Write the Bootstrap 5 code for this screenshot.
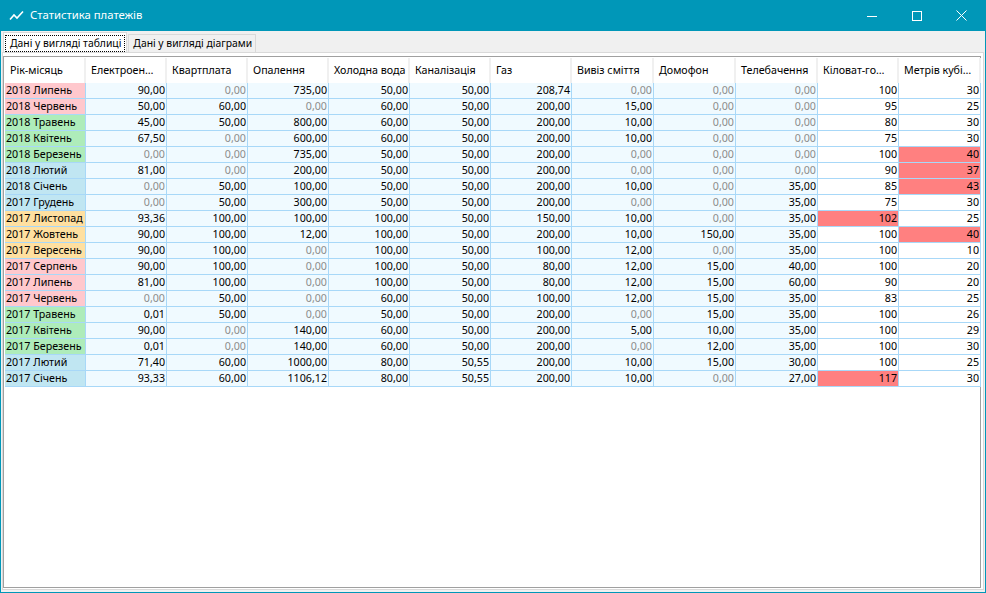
<!DOCTYPE html>
<html lang="uk"><head><meta charset="utf-8"><title>Статистика платежів</title>
<link rel="stylesheet" href="https://cdn.jsdelivr.net/npm/bootstrap@5.3.0/dist/css/bootstrap.min.css">
<style>
html,body{margin:0;height:593px;overflow:hidden}
body{font-family:"Noto Sans",sans-serif;font-size:10.7px;color:#000;background:#0097b8}
.win{width:986px;height:593px;padding:0 1px 1px}
.titlebar{height:31px;color:#fff;font-size:11.3px;padding-left:8px;padding-right:1px}
.ttl{margin-left:5px}
.wbtn{width:45px;height:31px}
.client{height:561px;background:#f0f0f0;padding:1px}
.tabbar{height:20px;padding-left:1px}
.tabx{height:18px;margin-top:2px;background:#f0f0f0;border:1px solid #d9d9d9;border-bottom:0;padding:0 3px 0 4px;line-height:17px;white-space:nowrap;font-size:10.35px}
.taba{height:20px;margin-top:0;margin-right:1px;background:#fff;padding:2px 1px 1px;line-height:15px}
.taba span{display:block;border:1px dotted #000;padding:0 3px 0 4px;height:17px;line-height:15px}
.pane{height:538px;background:#fff;border:1px solid #d9d9d9;padding:3px 2px 2px 0}
.frame{height:532px;border:1px solid #a0a0a0;background:#fff;padding:1px}
.grid{table-layout:fixed;border-collapse:separate;border-spacing:0;width:975px}
.grid th{height:25px;font-weight:400;padding:0 0 0 5px;background:#fff;border-right:2px solid #f0f0f0;border-bottom:0;white-space:nowrap;overflow:hidden;vertical-align:middle}
.grid td{height:16px;padding:0 1px 0 0;text-align:right;background:#f0faff;border-right:1px solid #a8d8f8;border-bottom:1px solid #a8d8f8;line-height:15px;white-space:nowrap;overflow:hidden}
.grid td:first-child{text-align:left;padding-left:1px}
.grid td.wh{background:#fff}
.grid td.z{color:#8c8c8c}
.grid td.hot{background:#ff8080}
.grid td.pk{background:#ffc8cd}
.grid td.gr{background:#aeecba}
.grid td.bl{background:#c0e6f2}
.grid td.ye{background:#ffe0a0}
</style></head><body>
<div class="win d-flex flex-column">
<div class="titlebar d-flex align-items-center">
<svg width="16" height="16" viewBox="0 0 16 16" fill="none" stroke="#fff" stroke-width="1.6"><path d="M1 11.5 5 7l3 3 6-6.500"/></svg>
<span class="ttl flex-grow-1">Статистика платежів</span>
<div class="wbtn d-flex align-items-center justify-content-center"><svg width="10" height="10" viewBox="0 0 10 10"><path d="M0 5.500h10" stroke="#fff"/></svg></div>
<div class="wbtn d-flex align-items-center justify-content-center"><svg width="10" height="10" viewBox="0 0 10 10" fill="none"><rect x=".5" y=".5" width="9" height="9" stroke="#fff"/></svg></div>
<div class="wbtn d-flex align-items-center justify-content-center"><svg width="11" height="11" viewBox="0 0 11 11" fill="none"><path d="M.5.500l10 10M10.500.500l-10 10" stroke="#fff"/></svg></div>
</div>
<div class="client">
<div class="tabbar d-flex align-items-start">
<div class="tabx taba"><span>Дані у вигляді таблиці</span></div>
<div class="tabx">Дані у вигляді діаграми</div>
</div>
<div class="pane"><div class="frame">
<table class="grid" id="t"><colgroup id="cg"></colgroup><thead><tr id="h"></tr></thead><tbody id="b"></tbody></table>
</div></div>
</div>
</div>
<script>
const W=[81,81,81,81,81,81,81,82,82,82,81,82];
document.getElementById('cg').innerHTML=W.map(w=>`<col style="width:${w}px">`).join('');
const H=['Рік-місяць','Електроен…','Квартплата','Опалення','Холодна вода','Каналізація','Газ','Вивіз сміття','Домофон','Телебачення','Кіловат-го…','Метрів кубі…'];
document.getElementById('h').innerHTML=H.map(x=>`<th>${x}</th>`).join('');
const R=`pk|2018 Липень|90,00|0,00|735,00|50,00|50,00|208,74|0,00|0,00|0,00|100|30
pk|2018 Червень|50,00|60,00|0,00|60,00|50,00|200,00|15,00|0,00|0,00|95|25
gr|2018 Травень|45,00|50,00|800,00|60,00|50,00|200,00|10,00|0,00|0,00|80|30
gr|2018 Квітень|67,50|0,00|600,00|60,00|50,00|200,00|10,00|0,00|0,00|75|30
gr|2018 Березень|0,00|0,00|735,00|50,00|50,00|200,00|0,00|0,00|0,00|100|40!
bl|2018 Лютий|81,00|0,00|200,00|50,00|50,00|200,00|0,00|0,00|0,00|90|37!
bl|2018 Січень|0,00|50,00|100,00|50,00|50,00|200,00|10,00|0,00|35,00|85|43!
bl|2017 Грудень|0,00|50,00|300,00|50,00|50,00|200,00|0,00|0,00|35,00|75|30
ye|2017 Листопад|93,36|100,00|100,00|100,00|50,00|150,00|10,00|0,00|35,00|102!|25
ye|2017 Жовтень|90,00|100,00|12,00|100,00|50,00|200,00|10,00|150,00|35,00|100|40!
ye|2017 Вересень|90,00|100,00|0,00|100,00|50,00|100,00|12,00|0,00|35,00|100|10
pk|2017 Серпень|90,00|100,00|0,00|100,00|50,00|80,00|12,00|15,00|40,00|100|20
pk|2017 Липень|81,00|100,00|0,00|100,00|50,00|80,00|12,00|15,00|60,00|90|20
pk|2017 Червень|0,00|50,00|0,00|60,00|50,00|100,00|12,00|15,00|35,00|83|25
gr|2017 Травень|0,01|50,00|0,00|50,00|50,00|200,00|0,00|15,00|35,00|100|26
gr|2017 Квітень|90,00|0,00|140,00|60,00|50,00|200,00|5,00|10,00|35,00|100|29
gr|2017 Березень|0,01|0,00|140,00|60,00|50,00|200,00|0,00|12,00|35,00|100|30
bl|2017 Лютий|71,40|60,00|1000,00|80,00|50,55|200,00|10,00|15,00|30,00|100|25
bl|2017 Січень|93,33|60,00|1106,12|80,00|50,55|200,00|10,00|0,00|27,00|117!|30`.split('\n');
document.getElementById('b').innerHTML=R.map(l=>{const p=l.split('|');
 return '<tr>'+p.slice(1).map((v,i)=>{let c=[];if(i==0)c.push(p[0]);
  if(i>=10)c.push('wh');if(v=='0,00')c.push('z');
  if(v.endsWith('!')){c.push('hot');v=v.slice(0,-1)}
  return `<td class="${c.join(' ')}">${v}</td>`}).join('')+'</tr>'}).join('');
</script>
<script src="https://cdn.jsdelivr.net/npm/bootstrap@5.3.0/dist/js/bootstrap.bundle.min.js"></script>
</body></html>
